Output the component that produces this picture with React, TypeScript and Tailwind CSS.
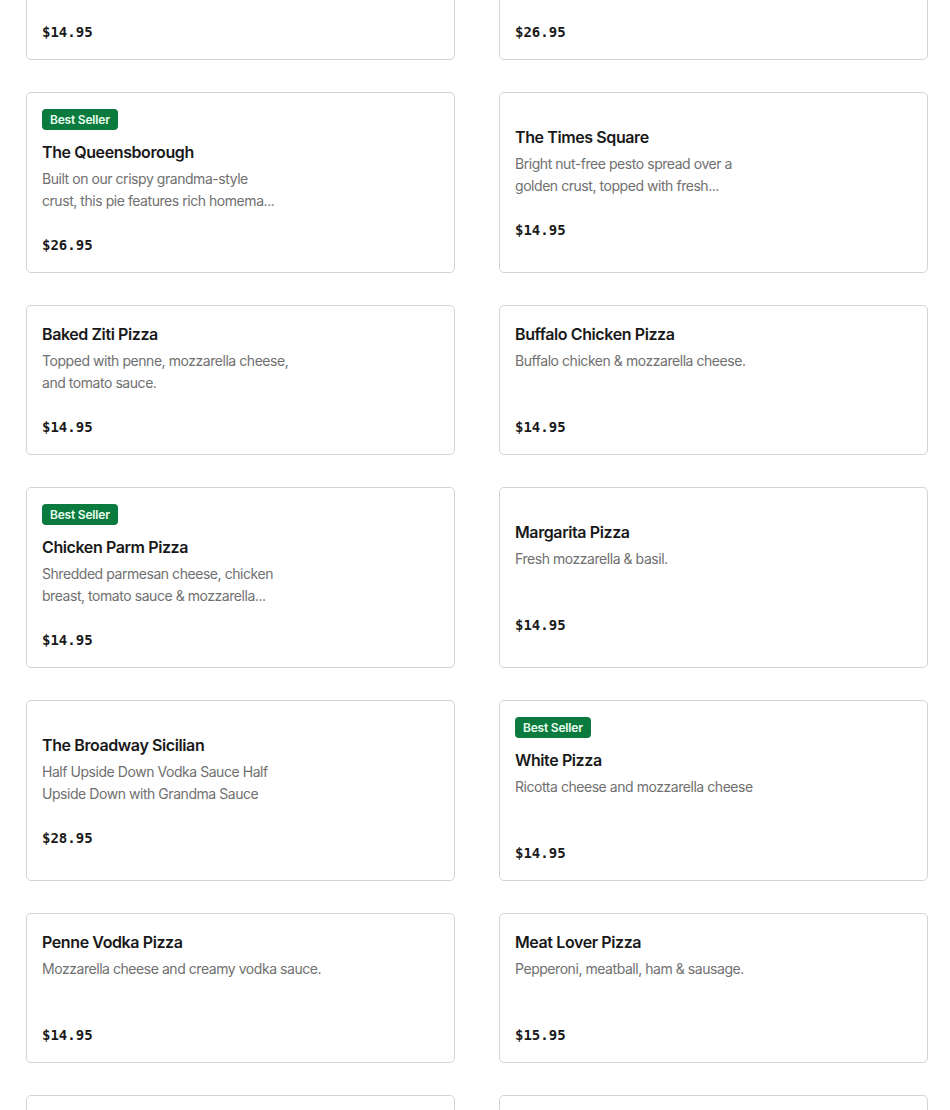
import React from 'react';

interface Item {
  name: string;
  desc: string[];
  price: string;
  bestSeller?: boolean;
}

const items: Item[] = [
  { name: 'Cheese Pizza', desc: ['Classic tomato sauce and', 'mozzarella cheese.'], price: '$14.95' },
  { name: 'The Grandma Pie', desc: ['Thin crispy square crust with', 'plum tomato sauce & fresh...'], price: '$26.95' },
  {
    name: 'The Queensborough',
    desc: ['Built on our crispy grandma-style', 'crust, this pie features rich homema...'],
    price: '$26.95',
    bestSeller: true,
  },
  { name: 'The Times Square', desc: ['Bright nut-free pesto spread over a', 'golden crust, topped with fresh...'], price: '$14.95' },
  { name: 'Baked Ziti Pizza', desc: ['Topped with penne, mozzarella cheese,', 'and tomato sauce.'], price: '$14.95' },
  { name: 'Buffalo Chicken Pizza', desc: ['Buffalo chicken & mozzarella cheese.'], price: '$14.95' },
  {
    name: 'Chicken Parm Pizza',
    desc: ['Shredded parmesan cheese, chicken', 'breast, tomato sauce & mozzarella...'],
    price: '$14.95',
    bestSeller: true,
  },
  { name: 'Margarita Pizza', desc: ['Fresh mozzarella & basil.'], price: '$14.95' },
  { name: 'The Broadway Sicilian', desc: ['Half Upside Down Vodka Sauce Half', 'Upside Down with Grandma Sauce'], price: '$28.95' },
  { name: 'White Pizza', desc: ['Ricotta cheese and mozzarella cheese'], price: '$14.95', bestSeller: true },
  { name: 'Penne Vodka Pizza', desc: ['Mozzarella cheese and creamy vodka sauce.'], price: '$14.95' },
  { name: 'Meat Lover Pizza', desc: ['Pepperoni, meatball, ham & sausage.'], price: '$15.95' },
  { name: 'Veggie Pizza', desc: ['Mushrooms, peppers, onions & olives.'], price: '$15.95' },
  { name: 'Hawaiian Pizza', desc: ['Ham & pineapple.'], price: '$15.95' },
];

function MenuCard({ item }: { item: Item }) {
  return (
    <div className="flex flex-col justify-center rounded-[5px] border border-[#d4d4d4] bg-white py-4 pr-4 pl-[15px]">
      {item.bestSeller && (
        <div className="mb-[10px] flex">
          <span className="flex h-[21px] items-center rounded-[4px] bg-[#0b7a3e] px-[8px] text-[12px] font-semibold tracking-[-0.2px] text-[#eafff0]">
            Best Seller
          </span>
        </div>
      )}
      <div className="text-[16px] font-semibold leading-6 tracking-[-0.4px] text-[#191919]">{item.name}</div>
      <div className="mt-1 min-h-[44px] text-[14px] leading-[22px] tracking-[-0.45px] text-[#707070]">
        {item.desc.map((line) => (
          <div key={line} className="whitespace-nowrap">
            {line}
          </div>
        ))}
      </div>
      <div className="mt-[23px] mb-[1px] text-[14px] font-bold leading-5 text-[#191919] [font-family:'DejaVu_Sans_Mono',monospace]">
        {item.price}
      </div>
    </div>
  );
}

export default function App() {
  return (
    <div className="min-h-screen bg-white [font-family:Inter,'Liberation_Sans',sans-serif]">
      <div className="-mt-[90px] grid grid-cols-2 gap-x-[44px] gap-y-[32px] pl-[26px] pr-[22px]">
        {items.map((item) => (
          <MenuCard key={item.name} item={item} />
        ))}
      </div>
    </div>
  );
}
